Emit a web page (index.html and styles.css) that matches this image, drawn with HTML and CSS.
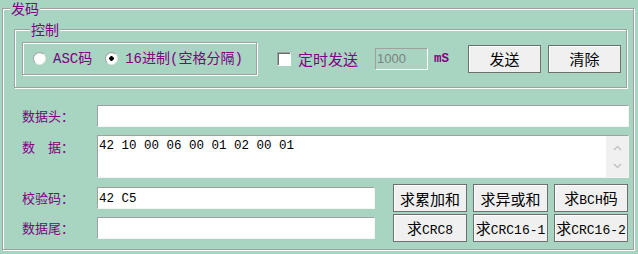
FILE: index.html
```html
<!DOCTYPE html>
<html>
<head>
  <meta charset="utf-8">
  <title>发码</title>
  <link rel="stylesheet" href="styles.css">
</head>
<body>

  <fieldset class="group send-group">
    <legend>发码</legend>

    <fieldset class="group ctrl-group">
      <legend>控制</legend>
      <div class="ctrl-row">
        <div class="mode-frame">
          <label class="radio-item"><span class="radio"></span>ASC码</label>
          <label class="radio-item"><span class="radio checked"></span>16进制(空格分隔)</label>
        </div>
        <label class="check-item"><span class="checkbox"></span>定时发送</label>
        <input class="period" type="text" value="1000" disabled>
        <span class="unit">mS</span>
        <button class="btn btn-ctrl btn-send">发送</button>
        <button class="btn btn-ctrl">清除</button>
      </div>
    </fieldset>

    <div class="field-row head-row">
      <span class="field-label">数据头：</span>
      <input class="field" type="text">
    </div>

    <div class="field-row memo-row">
      <span class="field-label">数　据：</span>
      <div class="field memo">
        <textarea class="memo-text">42 10 00 06 00 01 02 00 01</textarea>
        <div class="scroll">
          <svg width="9" height="6" viewBox="0 0 9 6"><polyline points="1,5 4.5,1.5 8,5" fill="none" stroke="#c2c2c2" stroke-width="1.4"/></svg>
          <svg width="9" height="6" viewBox="0 0 9 6"><polyline points="1,1 4.5,4.5 8,1" fill="none" stroke="#c2c2c2" stroke-width="1.4"/></svg>
        </div>
      </div>
    </div>

    <div class="calc">
      <div class="calc-fields">
        <div class="field-row">
          <span class="field-label">校验码：</span>
          <input class="field" type="text" value="42 C5">
        </div>
        <div class="field-row">
          <span class="field-label">数据尾：</span>
          <input class="field" type="text">
        </div>
      </div>
      <div class="calc-buttons">
        <button class="btn">求累加和</button>
        <button class="btn">求异或和</button>
        <button class="btn">求<span class="en">BCH</span>码</button>
        <button class="btn">求<span class="en">CRC8</span></button>
        <button class="btn">求<span class="en">CRC16-1</span></button>
        <button class="btn">求<span class="en">CRC16-2</span></button>
      </div>
    </div>
  </fieldset>

</body>
</html>
```

FILE: styles.css
```css
body {
  margin: 0;
  width: 638px;
  height: 254px;
  overflow: hidden;
  background-color: #a7d5c1;
  font-family: "Noto Sans CJK SC", sans-serif;
}

/* etched group boxes */
.group {
  margin: 0;
  padding: 0;
  min-inline-size: 0;
  border: 1px solid #a0a0a0;
  box-shadow: inset 1px 1px 0 #ffffff, 1px 1px 0 #ffffff;
}

.group > legend {
  padding: 0 1px;
  color: #800080;
  font-size: 14px;
  line-height: 16px;
  background-color: #a7d5c1;
}

.send-group {
  margin: 0 4px 0 2px;
  padding-bottom: 7px;
}

.send-group > legend {
  margin-left: 7px;
}

.ctrl-group {
  margin: 5px 6px 0 11px;
  padding: 5px 0 12px 7px;
}

.ctrl-group > legend {
  margin-left: 8px;
}

.ctrl-row {
  display: flex;
  align-items: center;
}

.mode-frame {
  display: flex;
  align-items: center;
  box-sizing: border-box;
  width: 235px;
  height: 33px;
  padding-left: 10px;
  border: 1px solid #a0a0a0;
  box-shadow: inset 1px 1px 0 #ffffff, 1px 1px 0 #ffffff;
}

.radio-item {
  display: flex;
  align-items: center;
  gap: 7px;
  color: #800080;
  font-family: "Liberation Mono", "Noto Sans CJK SC", monospace;
  font-size: 14px;
  line-height: 16px;
}

.radio-item + .radio-item {
  margin-left: 13px;
}

.radio {
  box-sizing: border-box;
  width: 13px;
  height: 13px;
  border-radius: 50%;
  border: 1px solid;
  border-color: #a0a0a0 #e6e6e6 #e6e6e6 #a0a0a0;
  background-color: #ffffff;
}

.radio.checked {
  background: radial-gradient(circle, #000000 0, #000000 2px, #ffffff 2.5px);
}

.check-item {
  display: flex;
  align-items: center;
  gap: 7px;
  margin-left: 20px;
  color: #800080;
  font-size: 15px;
  line-height: 18px;
}

.checkbox {
  box-sizing: border-box;
  width: 14px;
  height: 14px;
  border: 1px solid;
  border-color: #a0a0a0 #ffffff #ffffff #a0a0a0;
  box-shadow: inset 1px 1px 0 #696969;
  background-color: #ffffff;
}

.period {
  box-sizing: border-box;
  width: 53px;
  height: 22px;
  margin-left: 17px;
  padding: 0 1px;
  border: 1px solid;
  border-color: #a0a0a0 #ffffff #ffffff #a0a0a0;
  background-color: transparent;
  color: #808080;
  font-family: "Liberation Sans", sans-serif;
  font-size: 13px;
}

.unit {
  margin-left: 6px;
  color: #800080;
  font-family: "Liberation Mono", monospace;
  font-size: 12.5px;
  font-weight: bold;
}

.btn {
  box-sizing: border-box;
  padding: 0;
  border: 1px solid #6f6f6f;
  box-shadow: inset 1px 1px 0 #ffffff;
  background-color: #f0f0f0;
  color: #000000;
  font-family: "Noto Sans CJK SC", sans-serif;
  font-size: 15px;
  line-height: 1;
  white-space: nowrap;
}

.btn .en {
  font-family: "Liberation Mono", monospace;
  font-size: 13px;
}

.btn-ctrl {
  width: 73px;
  height: 28px;
}

.btn-send {
  margin-left: 19px;
  margin-right: 7px;
}

/* data rows */
.field-row {
  display: flex;
  align-items: center;
  padding-left: 19px;
  margin-right: 4px;
}

.field-label {
  width: 75px;
  flex: none;
  color: #800080;
  font-size: 13px;
  line-height: 22px;
}

.field {
  box-sizing: border-box;
  flex: 1;
  min-width: 0;
  height: 22px;
  margin: 0;
  padding: 1px 0 0 1px;
  border: 1px solid;
  border-color: #a0a0a0 #f4f4f4 #f4f4f4 #a0a0a0;
  background-color: #ffffff;
  color: #000000;
  font-family: "Liberation Mono", monospace;
  font-size: 12.5px;
}

.head-row {
  margin-top: 17px;
}

.memo-row {
  align-items: flex-start;
  margin-top: 8px;
}

.memo-row .field-label {
  line-height: 20px;
  padding-top: 2px;
}

.memo {
  display: flex;
  height: 43px;
  padding: 0;
}

.memo-text {
  flex: 1;
  margin: 0;
  padding: 3px 0 0 1px;
  border: none;
  resize: none;
  overflow: hidden;
  outline: none;
  font-family: "Liberation Mono", monospace;
  font-size: 12.5px;
  line-height: 14px;
  color: #000000;
}

.scroll {
  display: flex;
  flex-direction: column;
  justify-content: space-between;
  align-items: center;
  width: 22px;
  padding: 9px 0 8px;
  box-sizing: border-box;
  background-color: #f0f0f0;
}

.scroll svg {
  display: block;
}

.calc {
  display: flex;
  margin-top: 6px;
}

.calc-fields {
  display: grid;
  grid-template-rows: 28px 28px;
  row-gap: 2px;
  width: 372px;
}

.calc-fields .field-row {
  margin-right: 0;
}

.calc-buttons {
  display: grid;
  grid-template-columns: 74px 75px 74px;
  grid-template-rows: 28px 28px;
  column-gap: 6px;
  row-gap: 2px;
  margin-left: 18px;
}
```
